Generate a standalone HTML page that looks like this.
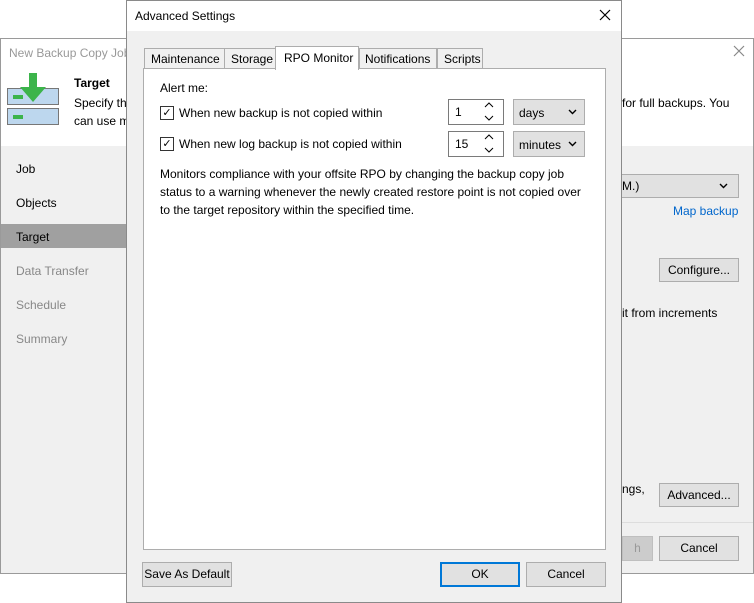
<!DOCTYPE html>
<html><head><style>
*{box-sizing:border-box;margin:0;padding:0}
body{width:754px;height:603px;background:#fff;font-family:"Liberation Sans",sans-serif;font-size:12px;color:#000;position:relative;overflow:hidden}
.a{position:absolute}
.btn{position:absolute;background:#e1e1e1;border:1px solid #adadad;text-align:center;line-height:22px;font-size:12px}
</style></head><body>
<!-- background wizard -->
<div class="a" style="left:0;top:38px;width:754px;height:536px;border:1px solid #9a9a9a;background:#f0f0f0"></div>
<div class="a" style="left:1px;top:39px;width:752px;height:107px;background:#fff"></div>
<div class="a" style="left:9px;top:46px;color:#999;font-size:12px">New Backup Copy Job</div>
<svg class="a" style="left:733px;top:45px" width="12" height="12"><path d="M1 1L11 11M11 1L1 11" stroke="#888" stroke-width="1.2"/></svg>
<svg class="a" style="left:7px;top:73px" width="54" height="54">
<rect x="0.5" y="15.5" width="51" height="16" fill="#bdd7ee" stroke="#777"/>
<rect x="0.5" y="35.5" width="51" height="16" fill="#bdd7ee" stroke="#777"/>
<rect x="6" y="22" width="10" height="4" fill="#3cb44b"/><rect x="6" y="42" width="10" height="4" fill="#3cb44b"/>
<path d="M22 0h8v14h9l-13 15-13-15h9z" fill="#3cb44b"/>
</svg>
<div class="a" style="left:74px;top:76px;font-weight:bold">Target</div>
<div class="a" style="left:74px;top:96px">Specify th</div>
<div class="a" style="left:74px;top:114px">can use m</div>
<div class="a" style="left:622px;top:96px">for full backups. You</div>
<div class="a" style="left:1px;top:224px;width:125px;height:24px;background:#a0a0a0"></div>
<div class="a" style="left:16px;top:162px">Job</div>
<div class="a" style="left:16px;top:196px">Objects</div>
<div class="a" style="left:16px;top:230px">Target</div>
<div class="a" style="left:16px;top:264px;color:#888">Data Transfer</div>
<div class="a" style="left:16px;top:298px;color:#888">Schedule</div>
<div class="a" style="left:16px;top:332px;color:#888">Summary</div>
<div class="a" style="left:126px;top:146px;width:1px;height:427px;background:#999"></div>
<div class="a" style="left:610px;top:174px;width:129px;height:24px;background:#e1e1e1;border:1px solid #adadad"></div>
<div class="a" style="left:622px;top:179px">M.)</div>
<svg class="a" style="left:719px;top:183px" width="9" height="6"><path d="M1 1l3.5 3.5L8 1" stroke="#000" stroke-width="1.4" fill="none"/></svg>
<div class="a" style="left:673px;top:204px;color:#0066cc">Map backup</div>
<div class="btn" style="left:659px;top:258px;width:80px;height:24px">Configure...</div>
<div class="a" style="left:622px;top:306px">it from increments</div>
<div class="a" style="left:622px;top:482px">ngs,</div>
<div class="btn" style="left:659px;top:483px;width:80px;height:24px">Advanced...</div>
<div class="a" style="left:622px;top:522px;width:131px;height:1px;background:#ddd"></div>
<div class="btn" style="left:622px;top:536px;width:31px;height:25px;background:#ccc;border-color:#bfbfbf;color:#999">h</div>
<div class="btn" style="left:659px;top:536px;width:80px;height:25px">Cancel</div>
<!-- dialog -->
<div class="a" style="left:126px;top:0;width:496px;height:603px;border:1px solid #8a8a8a;background:#f0f0f0"></div>
<div class="a" style="left:127px;top:1px;width:494px;height:30px;background:#fff"></div>
<div class="a" style="left:135px;top:9px">Advanced Settings</div>
<svg class="a" style="left:599px;top:9px" width="12" height="12"><path d="M1 1L11 11M11 1L1 11" stroke="#000" stroke-width="1.2"/></svg>
<div class="a" style="left:143px;top:68px;width:463px;height:482px;background:#fff;border:1px solid #adadad"></div>
<div class="a" style="left:144px;top:48px;width:81px;height:21px;border:1px solid #adadad;background:#f0f0f0;padding:3px 0 0 6px">Maintenance</div>
<div class="a" style="left:224px;top:48px;width:52px;height:21px;border:1px solid #adadad;background:#f0f0f0;padding:3px 0 0 6px">Storage</div>
<div class="a" style="left:275px;top:46px;width:84px;height:24px;border:1px solid #adadad;border-bottom:none;background:#fff;padding:4px 0 0 8px">RPO Monitor</div>
<div class="a" style="left:359px;top:48px;width:78px;height:21px;border:1px solid #adadad;background:#f0f0f0;padding:3px 0 0 5px">Notifications</div>
<div class="a" style="left:437px;top:48px;width:46px;height:21px;border:1px solid #adadad;background:#f0f0f0;padding:3px 0 0 6px">Scripts</div>
<div class="a" style="left:160px;top:81px">Alert me:</div>
<div class="a" style="left:160px;top:106px;width:14px;height:14px;border:1px solid #333;font-size:11px;line-height:12px;text-align:center">✓</div>
<div class="a" style="left:179px;top:106px">When new backup is not copied within</div>
<div class="a" style="left:160px;top:137px;width:14px;height:14px;border:1px solid #333;font-size:11px;line-height:12px;text-align:center">✓</div>
<div class="a" style="left:179px;top:137px">When new log backup is not copied within</div>
<div class="a" style="left:448px;top:99px;width:56px;height:26px;border:1px solid #7a7a7a;background:#fff;padding:5px 0 0 6px">1</div>
<div class="a" style="left:448px;top:131px;width:56px;height:26px;border:1px solid #7a7a7a;background:#fff;padding:5px 0 0 6px">15</div>
<svg class="a" style="left:484px;top:102px" width="10" height="20"><path d="M1 5l4-4 4 4M1 14l4 4 4-4" stroke="#000" fill="none"/></svg>
<svg class="a" style="left:484px;top:134px" width="10" height="20"><path d="M1 5l4-4 4 4M1 14l4 4 4-4" stroke="#000" fill="none"/></svg>
<div class="a" style="left:513px;top:99px;width:72px;height:26px;border:1px solid #adadad;background:#e1e1e1;padding:6px 0 0 5px">days<svg style="position:absolute;right:7px;top:9px" width="9" height="6"><path d="M1 1l3.5 3.5L8 1" stroke="#000" stroke-width="1.4" fill="none"/></svg></div>
<div class="a" style="left:513px;top:131px;width:72px;height:26px;border:1px solid #adadad;background:#e1e1e1;padding:6px 0 0 5px">minutes<svg style="position:absolute;right:7px;top:9px" width="9" height="6"><path d="M1 1l3.5 3.5L8 1" stroke="#000" stroke-width="1.4" fill="none"/></svg></div>
<div class="a" style="left:160px;top:165px;line-height:18px;width:430px">Monitors compliance with your offsite RPO by changing the backup copy job status to a warning whenever the newly created restore point is not copied over to the target repository within the specified time.</div>
<div class="btn" style="left:142px;top:562px;width:90px;height:25px">Save As Default</div>
<div class="btn" style="left:440px;top:562px;width:80px;height:25px;border:2px solid #0078d7;line-height:21px">OK</div>
<div class="btn" style="left:526px;top:562px;width:80px;height:25px">Cancel</div>
</body></html>
